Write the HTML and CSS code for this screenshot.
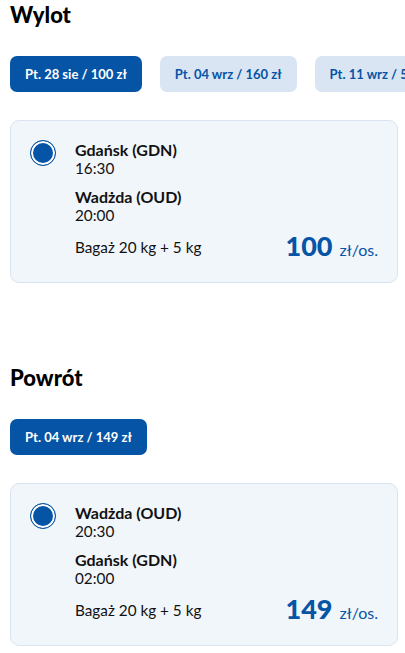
FILE: index.html
```html
<!DOCTYPE html>
<html lang="pl">

<head>
    <meta charset="UTF-8" />
    <meta name="viewport" content="width=device-width, initial-scale=1.0" />
    <title>Loty</title>
    <link rel="stylesheet" href="styles.css">
</head>

<body>
    <div class="page">
        <!-- wylot -->
        <section class="leg">
            <h2 class="leg-title">Wylot</h2>
            <div class="dates">
                <button class="date active">Pt. 28 sie / 100 zł</button>
                <button class="date">Pt. 04 wrz / 160 zł</button>
                <button class="date">Pt. 11 wrz / 50 zł</button>
            </div>
            <div class="card">
                <span class="radio"></span>
                <div class="info">
                    <div class="stop">
                        <div class="city">Gdańsk (GDN)</div>
                        <div class="time">16:30</div>
                    </div>
                    <div class="stop">
                        <div class="city">Wadżda (OUD)</div>
                        <div class="time">20:00</div>
                    </div>
                    <div class="bottom-row">
                        <span class="luggage">Bagaż 20 kg + 5 kg</span>
                        <span class="price"><b>100</b> zł/os.</span>
                    </div>
                </div>
            </div>
        </section>

        <!-- powrót -->
        <section class="leg">
            <h2 class="leg-title">Powrót</h2>
            <div class="dates">
                <button class="date active">Pt. 04 wrz / 149 zł</button>
            </div>
            <div class="card">
                <span class="radio"></span>
                <div class="info">
                    <div class="stop">
                        <div class="city">Wadżda (OUD)</div>
                        <div class="time">20:30</div>
                    </div>
                    <div class="stop">
                        <div class="city">Gdańsk (GDN)</div>
                        <div class="time">02:00</div>
                    </div>
                    <div class="bottom-row">
                        <span class="luggage">Bagaż 20 kg + 5 kg</span>
                        <span class="price"><b>149</b> zł/os.</span>
                    </div>
                </div>
            </div>
        </section>
    </div>
</body>

</html>
```

FILE: styles.css
```css
body {
    margin: 0;
    padding: 0;
    font-family: Lato, "Liberation Sans", Arial, sans-serif;
    color: #111;
    background: #fff;
}

.page {
    padding: 2px 0 0 10px;
}

.leg + .leg {
    margin-top: 82px;
}

.leg-title {
    margin: 0 0 28px;
    font-size: 22px;
    line-height: 26px;
    font-weight: 900;
    color: #000;
}

.dates {
    display: flex;
    gap: 18px;
    overflow: hidden;
    margin-bottom: 28px;
}

.date {
    flex-shrink: 0;
    height: 36px;
    padding: 0 15px;
    border: none;
    border-radius: 7px;
    font-family: inherit;
    font-size: 13px;
    font-weight: 700;
    white-space: nowrap;
    background-color: #dae5f3;
    color: #0654a5;
    cursor: pointer;
}

.date.active {
    background-color: #0654a5;
    color: #fff;
}

.card {
    display: flex;
    gap: 19px;
    margin-right: 7px;
    padding: 19px 19px 19px 19px;
    border: 1px solid #d9e4f0;
    border-radius: 9px;
    background-color: #f1f6fb;
}

.radio {
    flex-shrink: 0;
    width: 24px;
    height: 24px;
    border: 1px solid #0654a5;
    border-radius: 50%;
    background-color: #0654a5;
    box-shadow: inset 0 0 0 2px #fff;
}

.info {
    flex: 1;
    font-size: 15.3px;
    line-height: 19px;
}

.stop + .stop {
    margin-top: 9px;
}

.city {
    font-size: 16px;
    font-weight: 700;
}

.bottom-row {
    display: flex;
    justify-content: space-between;
    align-items: center;
    margin-top: 7px;
}

.price {
    color: #0654a5;
    font-size: 16px;
    line-height: 27px;
}

.price b {
    font-size: 27px;
    font-weight: 900;
    margin-right: 3px;
}
```
